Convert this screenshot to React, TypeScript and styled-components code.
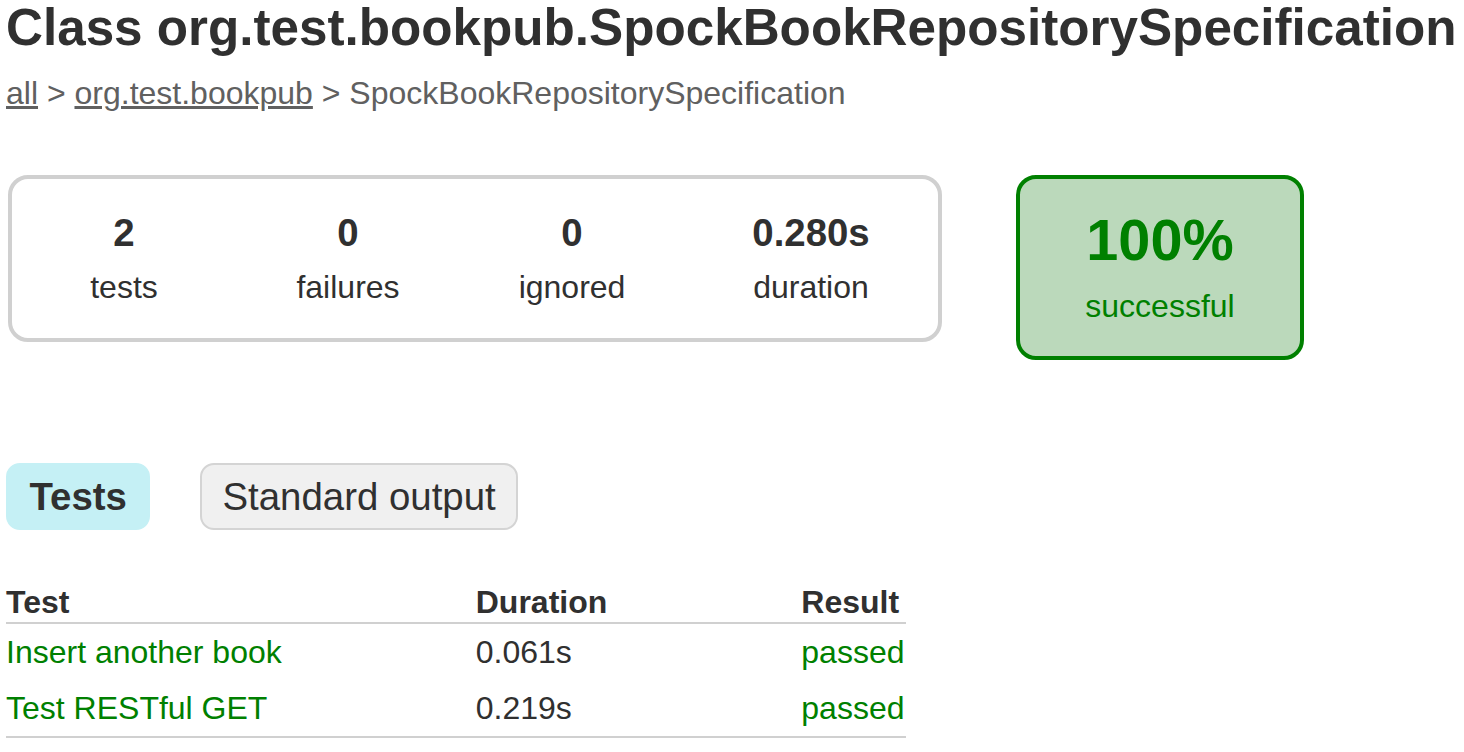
import React from "react";
import styled, { createGlobalStyle } from "styled-components";

type Counter = { value: string; label: string; wide?: boolean };
type TestRow = { name: string; duration: string; result: string };

const counters: Counter[] = [
  { value: "2", label: "tests" },
  { value: "0", label: "failures" },
  { value: "0", label: "ignored" },
  { value: "0.280s", label: "duration", wide: true },
];

const rows: TestRow[] = [
  { name: "Insert another book", duration: "0.061s", result: "passed" },
  { name: "Test RESTful GET", duration: "0.219s", result: "passed" },
];

const App: React.FC = () => {
  return (
    <>
      <GlobalStyle />
      <Content>
        <Title>Class org.test.bookpub.SpockBookRepositorySpecification</Title>
        <Breadcrumbs>
          <a href="#all">all</a> &gt; <a href="#pkg">org.test.bookpub</a> &gt;
          SpockBookRepositorySpecification
        </Breadcrumbs>

        <Summary>
          <SummaryGroup>
            {counters.map((c) => (
              <InfoBox key={c.label} wide={c.wide}>
                <CounterValue>{c.value}</CounterValue>
                <CounterLabel>{c.label}</CounterLabel>
              </InfoBox>
            ))}
          </SummaryGroup>
          <SuccessRate>
            <Percent>100%</Percent>
            <CounterLabel>successful</CounterLabel>
          </SuccessRate>
        </Summary>

        <TabLinks>
          <Tab selected>Tests</Tab>
          <Tab>Standard output</Tab>
        </TabLinks>

        <TestTable>
          <thead>
            <tr>
              <th>Test</th>
              <th>Duration</th>
              <th>Result</th>
            </tr>
          </thead>
          <tbody>
            {rows.map((r) => (
              <tr key={r.name}>
                <SuccessCell>{r.name}</SuccessCell>
                <td>{r.duration}</td>
                <SuccessCell>{r.result}</SuccessCell>
              </tr>
            ))}
          </tbody>
        </TestTable>
      </Content>
    </>
  );
};

const GlobalStyle = createGlobalStyle`
  body {
    margin: 0;
    padding: 0;
    background: #ffffff;
    color: #303030;
    font-family: "Liberation Sans", Arial, Helvetica, sans-serif;
    font-size: 32px;
  }
`;

const Content = styled.div`
  padding: 0 6px;
  display: flex;
  flex-direction: column;
  align-items: flex-start;
`;

const Title = styled.h1`
  margin: 0 0 20px 0;
  font-size: 51.2px;
  line-height: 55px;
  font-weight: bold;
  white-space: nowrap;
`;

const Breadcrumbs = styled.div`
  color: #606060;
  line-height: 37px;
  white-space: nowrap;

  a {
    color: #606060;
    text-decoration: underline;
  }
`;

const Summary = styled.div`
  margin-top: 63px;
  margin-left: 2px;
  display: flex;
  align-items: flex-start;
  gap: 74px;
`;

const SummaryGroup = styled.div`
  display: flex;
  border: solid 4px #d0d0d0;
  border-radius: 20px;
`;

const InfoBox = styled.div<{ wide?: boolean }>`
  width: ${({ wide }) => (wide ? "250px" : "220px")};
  padding: 31px 2px 32px;
  text-align: center;
`;

const CounterValue = styled.p`
  margin: 0 0 14px 0;
  font-size: 38.4px;
  line-height: 45px;
  font-weight: bold;
`;

const CounterLabel = styled.p`
  margin: 0;
  line-height: 37px;
`;

const SuccessRate = styled.div`
  width: 280px;
  padding: 30px 0 31px;
  text-align: center;
  border: solid 4px #008000;
  border-radius: 20px;
  background-color: #bbd9bb;
  color: #008000;
`;

const Percent = styled.p`
  margin: 0 0 16px 0;
  font-size: 57.6px;
  line-height: 63px;
  font-weight: bold;
`;

const TabLinks = styled.ul`
  margin: 83px 0 0 0;
  padding: 20px 0;
  list-style: none;
  display: flex;
  gap: 50px;
`;

const Tab = styled.li<{ selected?: boolean }>`
  padding: ${({ selected }) => (selected ? "10px 21.5px" : "10px 20px")};
  border-radius: 14px;
  border: solid 2px ${({ selected }) => (selected ? "#c5f0f5" : "#d4d4d4")};
  background-color: ${({ selected }) => (selected ? "#c5f0f5" : "#f0f0f0")};
  font-size: 38.4px;
  line-height: 43px;
  font-weight: ${({ selected }) => (selected ? "bold" : "normal")};
  white-space: nowrap;
`;

const TestTable = styled.table`
  margin-top: 32px;
  border-collapse: collapse;
  border-bottom: solid #d0d0d0 2px;
  font-size: 32px;
  line-height: 36px;

  th {
    text-align: left;
    white-space: nowrap;
    padding: 2px 2px 2px 192px;
    border-bottom: solid #d0d0d0 2px;
    font-weight: bold;
  }

  td {
    white-space: nowrap;
    padding: 10px 2px 10px 192px;
  }

  th:first-child,
  td:first-child {
    padding-left: 0;
  }
`;

const SuccessCell = styled.td`
  color: #008000;
`;

export default App;
